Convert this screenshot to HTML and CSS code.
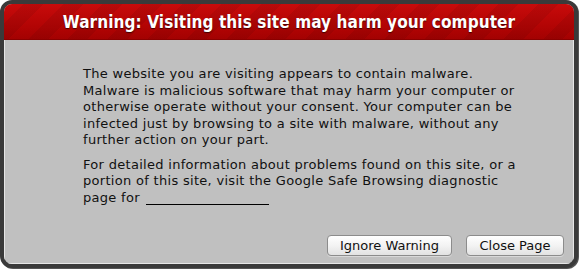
FILE: index.html
```html
<!DOCTYPE html>
<html>
<head>
<meta charset="utf-8">
<link rel="stylesheet" href="styles.css">
</head>
<body>
<div class="dialog">
  <div class="header">
    <h1 class="title">Warning: Visiting this site may harm your computer</h1>
  </div>
  <div class="content">
    <p class="para">The website you are visiting appears to contain malware. Malware is malicious software that may harm your computer or otherwise operate without your consent. Your computer can be infected just by browsing to a site with malware, without any further action on your part.</p>
    <p class="para">For detailed information about problems found on this site, or a portion of this site, visit the Google Safe Browsing diagnostic page for <span class="blank"></span></p>
    <div class="actions">
      <button class="btn btn-ignore">Ignore Warning</button>
      <button class="btn btn-close">Close Page</button>
    </div>
  </div>
</div>
</body>
</html>
```
FILE: styles.css
```css
html, body {
  margin: 0;
  padding: 0;
  background: #ffffff;
}
body {
  width: 579px;
  height: 272px;
  overflow: hidden;
}
.dialog {
  box-sizing: border-box;
  width: 578px;
  height: 268px;
  border: 4px solid #3a3a3a;
  border-radius: 12px;
  box-shadow: 1px 1px 0 #555555;
  overflow: hidden;
  display: flex;
  flex-direction: column;
  background: #c0c0c0;
  font-family: "DejaVu Sans", "Verdana", sans-serif;
}
.header {
  height: 36px;
  flex: none;
  display: flex;
  align-items: center;
  justify-content: center;
  background:
    repeating-linear-gradient(135deg, rgba(255,255,255,0.0) 0px, rgba(255,255,255,0.0) 14px, rgba(0,0,0,0.07) 14px, rgba(0,0,0,0.07) 28px),
    linear-gradient(to bottom, #c80b0b 0%, #b30404 60%, #a20202 100%);
  box-shadow: inset 0 -1px 0 #8a0000;
}
.title {
  margin: 0;
  color: #ffffff;
  font-family: "DejaVu Sans Condensed", "DejaVu Sans", sans-serif;
  font-size: 17px;
  font-weight: bold;
  letter-spacing: 0.1px;
  text-shadow: 0 1px 1px rgba(0,0,0,0.6);
  white-space: nowrap;
}
.content {
  flex: 1;
  display: flex;
  flex-direction: column;
  padding: 26px 10px 8px 79px;
  box-shadow: inset 1px 0 0 #e6e6e6, inset -1px 0 0 #e6e6e6, inset 0 -1px 0 #e6e6e6;
}
.para {
  margin: 0 0 8px 0;
  width: 436px;
  font-size: 13px;
  letter-spacing: 0.3px;
  line-height: 16.5px;
  color: #111111;
}
.blank {
  display: inline-block;
  width: 123px;
  border-bottom: 1px solid #000000;
  vertical-align: -3px;
  margin-left: 2px;
}
.actions {
  margin-top: auto;
  display: flex;
  justify-content: flex-end;
  gap: 14px;
}
.btn {
  height: 21px;
  padding: 0;
  border: 1px solid #8c8c8c;
  border-radius: 4px;
  background: linear-gradient(to bottom, #ffffff 0%, #f3f3f3 50%, #e2e2e2 100%);
  font-family: "DejaVu Sans", sans-serif;
  font-size: 13px;
  color: #111111;
  box-shadow: 0 1px 0 rgba(255,255,255,0.4);
}
.btn-ignore { width: 125px; }
.btn-close { width: 98px; }
```
